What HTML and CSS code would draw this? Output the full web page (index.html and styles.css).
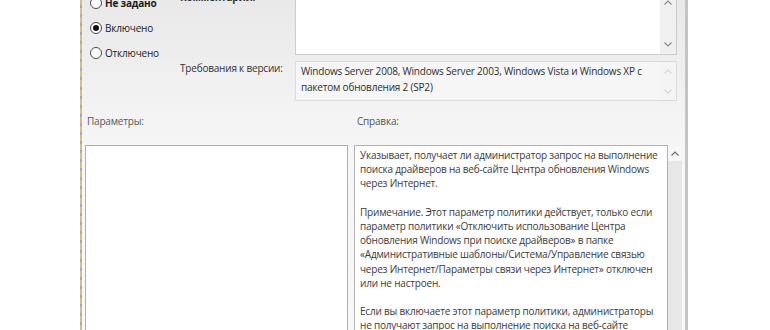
FILE: index.html
```html
<!DOCTYPE html>
<html lang="ru">
<head>
<meta charset="utf-8">
<title>Политика</title>
<link rel="stylesheet" href="styles.css">
</head>
<body>
<div class="page">
  <div class="dialog">
    <div class="top">
      <div class="radios">
        <div class="radio strong"><span class="circle"></span>Не задано</div>
        <div class="radio"><span class="circle on"></span>Включено</div>
        <div class="radio"><span class="circle"></span>Отключено</div>
      </div>
      <div class="lbl lbl-comment strong">Комментарий:</div>
      <div class="lbl lbl-version">Требования к версии:</div>
      <div class="box comment">
        <div class="box-body"></div>
        <div class="inscroll">
          <svg class="arr" width="8" height="5" viewBox="0 0 8 5"><polyline points="0.5,4.5 4,1 7.5,4.5" /></svg>
          <svg class="arr" width="8" height="5" viewBox="0 0 8 5"><polyline points="0.5,0.5 4,4 7.5,0.5" /></svg>
        </div>
      </div>
      <div class="box version">
        <div class="box-body vtext">Windows Server 2008, Windows Server 2003, Windows Vista и Windows XP с<br>пакетом обновления 2 (SP2)</div>
        <div class="inscroll faint">
          <svg class="arr" width="8" height="5" viewBox="0 0 8 5"><polyline points="0.5,4.5 4,1 7.5,4.5" /></svg>
          <svg class="arr" width="8" height="5" viewBox="0 0 8 5"><polyline points="0.5,0.5 4,4 7.5,0.5" /></svg>
        </div>
      </div>
    </div>
    <div class="bottom">
      <div class="sec-lbl lbl-params">Параметры:</div>
      <div class="sec-lbl lbl-help">Справка:</div>
      <div class="params"></div>
      <div class="help">
        <div class="help-text">
          <p>Указывает, получает ли администратор запрос на выполнение<br>поиска драйверов на веб-сайте Центра обновления Windows<br>через Интернет.</p>
          <p>Примечание. Этот параметр политики действует, только если<br>параметр политики «Отключить использование Центра<br>обновления Windows при поиске драйверов» в папке<br>«Административные шаблоны/Система/Управление связью<br>через Интернет/Параметры связи через Интернет» отключен<br>или не настроен.</p>
          <p>Если вы включаете этот параметр политики, администраторы<br>не получают запрос на выполнение поиска на веб-сайте</p>
        </div>
        <div class="vscroll">
          <div class="vbtn"><svg class="arr" width="8" height="5" viewBox="0 0 8 5"><polyline points="0.5,4.5 4,1 7.5,4.5" /></svg></div>
          <div class="vtrack"></div>
        </div>
      </div>
    </div>
  </div>
</div>
</body>
</html>
```
FILE: styles.css
```css
html, body {
  margin: 0;
  padding: 0;
  background: #ffffff;
}
body {
  width: 770px;
  height: 330px;
  overflow: hidden;
  font-family: "Open Sans", "Noto Sans", sans-serif;
  font-size: 10px;
  letter-spacing: -0.2px;
  color: #333;
}
.page {
  display: flex;
  padding-left: 80px;
  height: 330px;
}
.dialog {
  width: 603px;
  height: 330px;
  border-left: 2px solid transparent;
  border-right: 3px solid transparent;
  border-image: repeating-linear-gradient(to bottom, #d2bf8c 0 6px, #a9a9a9 6px 9px) 1;
  border-image-width: 0 0 0 2px;
  background: linear-gradient(to bottom, #e9e9e9 0px, #eeeeee 60px, #f4f4f4 120px, #f7f7f7 170px, #f8f8f8 100%);
  display: flex;
  flex-direction: column;
  position: relative;
}
.dialog::after {
  content: "";
  position: absolute;
  top: 0;
  right: -3px;
  width: 3px;
  height: 100%;
  background: #c4c4c4;
}
.strong {
  font-weight: 700;
  color: #111;
}
.top {
  margin-top: -10px;
  display: grid;
  grid-template-columns: 98px 115px 382px;
  grid-template-rows: 65px 40px;
  row-gap: 6px;
}
.radios {
  grid-column: 1;
  grid-row: 1 / 3;
  padding-left: 8px;
  display: flex;
  flex-direction: column;
}
.radio {
  height: 25px;
  display: flex;
  align-items: center;
  gap: 3px;
  color: #1c1c1c;
  line-height: 14px;
}
.circle {
  width: 10px;
  height: 10px;
  border: 1px solid #4a4a4a;
  border-radius: 50%;
  background: #fff;
  display: flex;
  align-items: center;
  justify-content: center;
}
.circle.on::after {
  content: "";
  width: 6px;
  height: 6px;
  border-radius: 50%;
  background: #111;
}
.lbl {
  grid-column: 2;
  line-height: 14px;
  color: #333;
}
.lbl-comment { grid-row: 1; }
.lbl-version { grid-row: 2; }
.box {
  grid-column: 3;
  display: flex;
  border: 1px solid #cbcbcb;
  min-width: 0;
}
.comment {
  grid-row: 1;
  background: #fff;
}
.version {
  grid-row: 2;
  background: #f6f6f6;
  border-color: #dadada;
}
.box-body {
  flex: 1;
  min-width: 0;
  overflow: hidden;
}
.vtext {
  padding: 2px 5px;
  line-height: 15.5px;
  white-space: nowrap;
  color: #2e2e2e;
}
.inscroll {
  width: 16px;
  flex: none;
  background: #f0f0f0;
  display: flex;
  flex-direction: column;
  align-items: center;
  justify-content: space-between;
  padding: 9px 0 7px;
}
.version .inscroll {
  background: #f4f4f4;
  padding: 7px 0 6px;
}
.arr {
  display: block;
}
.arr polyline {
  fill: none;
  stroke: #8a8a8a;
  stroke-width: 1.1;
}
.faint .arr polyline {
  stroke: #d6d6d6;
}
.bottom {
  margin-top: 13px;
  padding-left: 3px;
  display: grid;
  grid-template-columns: 263px 328px;
  grid-template-rows: 14px auto;
  column-gap: 6px;
  row-gap: 17px;
}
.sec-lbl {
  line-height: 14px;
  color: #555;
}
.lbl-params { padding-left: 2px; }
.lbl-help { padding-left: 3px; }
.params {
  height: 200px;
  background: #fff;
  border: 1px solid #aeaeae;
}
.help {
  display: flex;
  height: 202px;
  min-width: 0;
}
.help-text {
  flex: 1;
  min-width: 0;
  overflow: hidden;
  background: #fff;
  border: 1px solid #b2b2b2;
  padding: 2px 5px;
  line-height: 14.2px;
  white-space: nowrap;
  color: #3a3a3a;
}
.help-text p {
  margin: 0 0 14.2px;
}
.vscroll {
  width: 14px;
  flex: none;
  display: flex;
  flex-direction: column;
}
.vbtn {
  height: 16px;
  background: #f7f7f7;
  display: flex;
  align-items: center;
  justify-content: center;
}
.vbtn .arr polyline {
  stroke: #6a6a6a;
}
.vtrack {
  flex: 1;
  background: #e7e7e7;
}
```
